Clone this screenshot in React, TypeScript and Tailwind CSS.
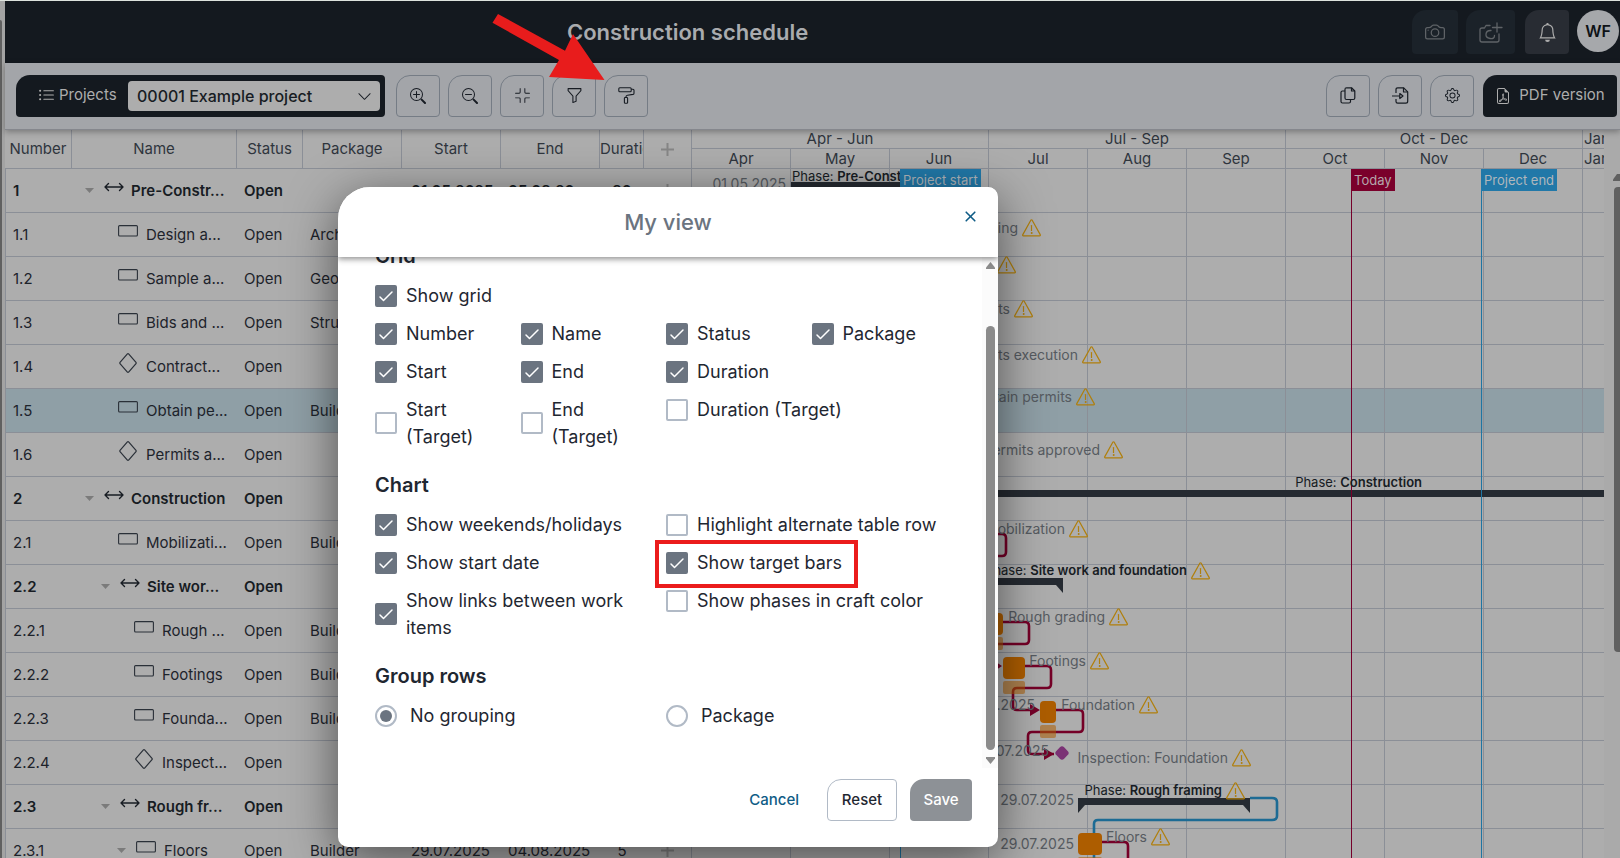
import React from "react";
import {
  BsListUl,
  BsZoomIn,
  BsZoomOut,
  BsFullscreenExit,
  BsFunnel,
  BsBell,
  BsCamera,
  BsGear,
  BsFileEarmarkPdf,
  BsChevronDown,
} from "react-icons/bs";

type Kind = "phase" | "task" | "milestone";
type Row = {
  no: string;
  name: string;
  kind: Kind;
  level: number;
  caret?: boolean;
  pkg?: string;
  start?: string;
  end?: string;
  days?: string;
  selected?: boolean;
};

const rows: Row[] = [
  { no: "1", name: "Pre-Constr...", kind: "phase", level: 0, caret: true, start: "01.05.2025", end: "05.09.20...", days: "90" },
  { no: "1.1", name: "Design a...", kind: "task", level: 1, pkg: "Architect" },
  { no: "1.2", name: "Sample a...", kind: "task", level: 1, pkg: "Geotech" },
  { no: "1.3", name: "Bids and ...", kind: "task", level: 1, pkg: "Structure" },
  { no: "1.4", name: "Contract...", kind: "milestone", level: 1 },
  { no: "1.5", name: "Obtain pe...", kind: "task", level: 1, pkg: "Builder", selected: true },
  { no: "1.6", name: "Permits a...", kind: "milestone", level: 1 },
  { no: "2", name: "Construction", kind: "phase", level: 0, caret: true },
  { no: "2.1", name: "Mobilizati...", kind: "task", level: 1, pkg: "Builder" },
  { no: "2.2", name: "Site wor...", kind: "phase", level: 1, caret: true },
  { no: "2.2.1", name: "Rough ...", kind: "task", level: 2, pkg: "Builder" },
  { no: "2.2.2", name: "Footings", kind: "task", level: 2, pkg: "Builder" },
  { no: "2.2.3", name: "Founda...", kind: "task", level: 2, pkg: "Builder" },
  { no: "2.2.4", name: "Inspect...", kind: "milestone", level: 2 },
  { no: "2.3", name: "Rough fr...", kind: "phase", level: 1, caret: true },
  { no: "2.3.1", name: "Floors", kind: "task", level: 2, caret: true, pkg: "Builder", start: "29.07.2025", end: "04.08.2025", days: "5" },
];

const months = ["Apr", "May", "Jun", "Jul", "Aug", "Sep", "Oct", "Nov", "Dec"];
const quarters = ["Apr - Jun", "Jul - Sep", "Oct - Dec"];

// Chart drawing origin: the canvas's top left corner in drawing units.
const OX = 692;
const OY = 169;
const CANVAS_W = 912;

type Label = { right: number; cy: number; text: string; phase?: boolean; warn?: boolean };
const labels: Label[] = [
  { right: 1041, cy: 228, text: "Design and engineering", warn: true },
  { right: 1016, cy: 265, text: "Sample approval", warn: true },
  { right: 1033, cy: 309, text: "Bids and contracts", warn: true },
  { right: 1101, cy: 355, text: "Contracts execution", warn: true },
  { right: 1095, cy: 397, text: "Obtain permits", warn: true },
  { right: 1123, cy: 450, text: "Permits approved", warn: true },
  { right: 1422, cy: 483, text: "Construction", phase: true },
  { right: 1088, cy: 529, text: "Mobilization", warn: true },
  { right: 1210, cy: 571, text: "Site work and foundation", phase: true, warn: true },
  { right: 1128, cy: 617, text: "Rough grading", warn: true },
  { right: 1109, cy: 661, text: "Footings", warn: true },
  { right: 1158, cy: 705, text: "Foundation", warn: true },
  { right: 1251, cy: 758, text: "Inspection: Foundation", warn: true },
  { right: 1245, cy: 791, text: "Rough framing", phase: true, warn: true },
  { right: 1170, cy: 837, text: "Floors", warn: true },
  { right: 786, cy: 184, text: "01.05.2025" },
  { right: 1035, cy: 705, text: "17.07.2025" },
  { right: 1049, cy: 751, text: "24.07.2025" },
  { right: 1074, cy: 800, text: "29.07.2025" },
  { right: 1074, cy: 844, text: "29.07.2025" },
];

function Warning() {
  return (
    <svg width="19" height="18" viewBox="0 0 19 18" fill="none" stroke="#b07f0c" strokeLinejoin="round" strokeLinecap="round">
      <path d="M8.8 1.2 .8 15.6q-.5 1.2.6 1.2h16.2q1.1 0 .6-1.2l-8-14.4q-.7-.9-1.4 0z" strokeWidth="1.2" />
      <path d="M9.5 6.5v5" strokeWidth="1.2" />
      <circle cx="9.5" cy="14" r=".5" fill="#b07f0c" />
    </svg>
  );
}

function KindIcon({ kind }: { kind: Kind }) {
  if (kind === "phase")
    return (
      <svg width="20" height="10" viewBox="0 0 20 10" fill="none" stroke="#171c23" strokeWidth="1.4" strokeLinecap="round" strokeLinejoin="round">
        <path d="M1 5h18M4.5 1.5 1 5l3.5 3.5M15.5 1.5 19 5l-3.5 3.5" />
      </svg>
    );
  if (kind === "task")
    return (
      <svg width="20" height="12" viewBox="0 0 20 12" fill="none" stroke="#2a3038" strokeWidth="1.1">
        <rect x=".6" y=".6" width="18.8" height="10.4" rx="1" />
      </svg>
    );
  return (
    <svg width="20" height="20" viewBox="0 0 20 20" fill="none" stroke="#2a3038" strokeWidth="1.2" strokeLinejoin="round">
      <path d="M9.4.9q.6-.6 1.2 0l7.4 8.500q.5.6 0 1.200l-7.400 8.500q-.6.6-1.200 0L2 10.600q-.5-.6 0-1.200z" />
    </svg>
  );
}

function PlusIcon() {
  return (
    <svg className="mx-auto block" width="13" height="13" viewBox="0 0 13 13" stroke="#868686" strokeWidth="2">
      <path d="M6.500 0v13M0 6.500h13" />
    </svg>
  );
}

function ToolButton({ label, children }: { label: string; children: React.ReactNode }) {
  return (
    <button
      type="button"
      aria-label={label}
      className="flex h-[42px] w-11 items-center justify-center rounded-[4px] rounded-tl-[14px] border border-[#757c85] text-[#171c23]"
    >
      {children}
    </button>
  );
}

function RollerIcon() {
  return (
    <svg width="17" height="17" viewBox="0 0 17 17" fill="none" stroke="currentColor" strokeWidth="1.1" strokeLinejoin="round">
      <rect x=".8" y=".8" width="12.4" height="4" rx="1" />
      <path d="M13.2 2.2h1.8q1 0 1 1v3q0 1-1 1.200l-5.500.8q-1.500.2-1.500 1.500v.8" />
      <rect x="6.400" y="10.500" width="3.200" height="5.700" rx=".8" />
    </svg>
  );
}

function CopyIcon() {
  return (
    <svg width="16" height="17" viewBox="0 0 16 17" fill="none" stroke="currentColor" strokeWidth="1.2" strokeLinejoin="round">
      <path d="M6.500.8h5L14.800 4v7q0 1.500-1.500 1.500H6.500Q5 12.500 5 11V2.300Q5 .8 6.500.8z" />
      <path d="M11.500.8V4h3.300M5 4H2.500Q1 4 1 5.500v9Q1 16 2.500 16h6.500q1.500 0 1.500-1.500v-2" />
    </svg>
  );
}

function ImportIcon() {
  return (
    <svg width="17" height="17" viewBox="0 0 17 17" fill="none" stroke="currentColor" strokeWidth="1.2" strokeLinejoin="round">
      <path d="M4 6V2.500Q4 .8 5.700.8h6l4 4v9.500q0 1.900-1.900 1.900H5.700Q4 16.200 4 14.500V12" />
      <path d="M11.500.8v4.200h4.200M0 9h7.500M7.800 6.500 11 9l-3.200 2.500z" />
    </svg>
  );
}

function CameraPlusIcon() {
  return (
    <svg width="24" height="21" viewBox="0 0 24 21" fill="none" stroke="currentColor" strokeWidth="1.3" strokeLinecap="round" strokeLinejoin="round">
      <path d="M11 3.500H7L5.500 6H3Q1 6 1 8v10q0 2 2 2h15q2 0 2-2v-6M18 1v9M13.500 5.500h9.500" />
      <path d="M12 8.500q-4.500-.3-5 3.500t4 4.500 4.500-3" />
    </svg>
  );
}

function Check({ label, checked }: { label: string; checked?: boolean }) {
  return (
    <label className="flex items-center gap-[9px]">
      <span className="relative flex size-[22px] shrink-0">
        <input
          type="checkbox"
          defaultChecked={checked}
          className="peer size-[22px] appearance-none rounded-[2px] border-2 border-[#b1bac6] bg-white checked:border-[#6b7480] checked:bg-[#6b7480]"
        />
        <svg
          className="pointer-events-none absolute inset-0 hidden peer-checked:block"
          width="22"
          height="22"
          viewBox="0 0 22 22"
          fill="none"
          stroke="#fff"
          strokeWidth="1.5"
          strokeLinecap="round"
          strokeLinejoin="round"
        >
          <path d="M5 12l3.500 3.500L17 7" />
        </svg>
      </span>
      <span>{label}</span>
    </label>
  );
}

function Radio({ label, checked }: { label: string; checked?: boolean }) {
  return (
    <label className="flex items-center gap-[13px]">
      <span className="relative flex size-[22px] shrink-0">
        <input
          type="radio"
          name="grouping"
          defaultChecked={checked}
          className="peer size-[22px] appearance-none rounded-full border-2 border-[#b1bac6] bg-white"
        />
        <span className="pointer-events-none absolute inset-[5px] hidden rounded-full bg-[#6b7480] peer-checked:block" />
      </span>
      <span>{label}</span>
    </label>
  );
}

function TopBar() {
  return (
    <header className="flex h-[62px] shrink-0 items-start bg-[#14191f] pr-px pt-[9px]">
      <h1 className="flex-1 pl-[562px] pt-1.5 text-[22px] font-semibold leading-8 text-[#a9abae]">Construction schedule</h1>
      <div className="flex items-start gap-2">
        <button type="button" aria-label="Snapshot" className="flex h-11 w-[46px] items-center justify-center rounded-[4px] rounded-tl-[14px] bg-[#1b2229] text-[#5f6367]">
          <BsCamera className="size-5" />
        </button>
        <button type="button" aria-label="Add snapshot" className="mr-0.5 flex h-11 w-[49px] items-center justify-center rounded-[4px] rounded-tl-[14px] bg-[#1b2229] text-[#5f6367]">
          <CameraPlusIcon />
        </button>
        <button type="button" aria-label="Notifications" className="flex h-11 w-11 items-center justify-center rounded-[4px] rounded-tl-[14px] bg-[#282c33] text-[#adadad]">
          <BsBell className="size-[19px]" />
        </button>
        <button type="button" className="size-[42px] rounded-full bg-[#a6a8ab] text-base font-semibold text-[#0e1216]">WF</button>
      </div>
    </header>
  );
}

function Toolbar() {
  return (
    <div className="z-10 flex h-[67px] shrink-0 items-center justify-between border-b border-[#85878d] bg-[#a3a5a9] pb-px pl-[11px] pr-[3px] shadow-[0_2px_6px_rgba(0,0,0,0.3)]">
      <div className="flex items-center gap-2">
        <div className="mr-[3px] flex h-[42px] items-center rounded-[4px] rounded-tl-[14px] bg-[#14191f] pl-[22px] pr-[5px]">
          <label htmlFor="project" className="flex w-[90px] items-center gap-1 text-[15px] text-[#adadad]">
            <BsListUl className="size-[17px]" />
            Projects
          </label>
          <div className="relative">
            <select id="project" className="h-[30px] w-[252px] appearance-none rounded-[4px] bg-[#adadad] pl-[9px] text-base font-medium text-[#171c23]">
              <option>00001 Example project</option>
            </select>
            <BsChevronDown className="pointer-events-none absolute right-2 top-2 size-[15px] text-[#171c23]" />
          </div>
        </div>
        <ToolButton label="Zoom in"><BsZoomIn className="size-4" /></ToolButton>
        <ToolButton label="Zoom out"><BsZoomOut className="size-4" /></ToolButton>
        <ToolButton label="Fit to view"><BsFullscreenExit className="size-[15px]" /></ToolButton>
        <ToolButton label="Filter"><BsFunnel className="size-[17px]" /></ToolButton>
        <ToolButton label="My view"><RollerIcon /></ToolButton>
      </div>
      <div className="flex items-center gap-2">
        <ToolButton label="Copy"><CopyIcon /></ToolButton>
        <ToolButton label="Import"><ImportIcon /></ToolButton>
        <ToolButton label="Settings"><BsGear className="size-[15px]" /></ToolButton>
        <button type="button" className="ml-px flex h-[42px] w-[134px] items-center justify-center gap-2 rounded-[4px] rounded-tl-[14px] bg-[#14191f] text-[15px] text-[#adadad]">
          <BsFileEarmarkPdf className="size-4" />
          PDF version
        </button>
      </div>
    </div>
  );
}

function TaskTable() {
  const th = "overflow-hidden whitespace-nowrap border-b border-r border-[#8b8f97] p-0 font-normal text-[#2f353d]";
  return (
    <table className="w-[687px] shrink-0 table-fixed border-separate border-spacing-0 self-start text-[15px] leading-5 text-[#1d232b]">
      <colgroup>
        <col className="w-[67px]" />
        <col className="w-[165px]" />
        <col className="w-[66px]" />
        <col className="w-[99px]" />
        <col className="w-[99px]" />
        <col className="w-[99px]" />
        <col className="w-11" />
        <col className="w-12" />
      </colgroup>
      <thead>
        <tr className="h-[39px]">
          {["Number", "Name", "Status", "Package", "Start", "End", "Duration"].map((h) => (
            <th key={h} className={th}>{h}</th>
          ))}
          <th className={th}>
            <button type="button" aria-label="Add column" className="block w-full">
              <PlusIcon />
            </button>
          </th>
        </tr>
      </thead>
      <tbody>
        {rows.map((r) => (
          <tr key={r.no} className={"h-11 " + (r.selected ? "bg-[#8f9fa6] " : "") + (r.kind === "phase" ? "font-semibold text-[#171c23]" : "")}>
            <td className="border-b border-l border-[#8b8f97] py-0 pl-[7px]">{r.no}</td>
            <td className="border-b border-[#8b8f97] p-0">
              <div className="flex items-center" style={{ paddingLeft: 13 + r.level * 16 }}>
                <span className="flex w-[9px] justify-center">
                  {r.caret && (
                    <svg width="9" height="5" viewBox="0 0 9 5" fill="#7b7b7b"><path d="M0 0h9L4.500 5z" /></svg>
                  )}
                </span>
                <span className={"mb-2 flex h-5 items-center " + (r.caret ? "ml-[10px]" : "ml-2")}>
                  <KindIcon kind={r.kind} />
                </span>
                <span className={"whitespace-nowrap " + (r.kind === "phase" ? "ml-[7px]" : "ml-2")}>{r.name}</span>
              </div>
            </td>
            <td className="border-b border-[#8b8f97] py-0 pl-[7px]">Open</td>
            <td className="border-b border-[#8b8f97] py-0 pl-[7px]">{r.pkg}</td>
            <td className="border-b border-[#8b8f97] py-0 pl-[9px]">{r.start}</td>
            <td className="border-b border-[#8b8f97] py-0 pl-[7px]">{r.end}</td>
            <td className="border-b border-[#8b8f97] p-0 text-center">{r.days}</td>
            <td className="border-b border-r border-[#8b8f97] p-0"><PlusIcon /></td>
          </tr>
        ))}
      </tbody>
    </table>
  );
}

function Drawing() {
  return (
    <svg className="absolute left-0 top-0" width={CANVAS_W} height="704" viewBox="692 169 912 704" fill="none">
      <g fill="#252a31">
        <path d="M791 182h109v7H791zM791 490h813v7H791z" />
        <path d="M791 578h272v15l-7-8H791z" />
        <path d="M1078 798h172v15l-7-8h-158l-7 8z" />
      </g>
      <g stroke="#750027" strokeWidth="2.6">
        <path d="M990 534h12q4 0 4 4v14q0 4-4 4h-12" />
        <path d="M1003 622h22q4 0 4 4v14q0 4-4 4h-40" />
        <path d="M1025 666h22q4 0 4 4v14q0 4-4 4h-30q-4 0-4 4v14q0 4 4 4h14" />
        <path d="M1056 710h23q4 0 4 4v14q0 4-4 4h-47q-4 0-4 4v14q0 4 4 4h22" />
        <path d="M1102 842h22q4 0 4 4v20" />
      </g>
      <g fill="#750027">
        <path d="M993 660l9 6-9 6zM1030 704l10 6-10 6zM1044 748l10 6-10 6z" />
      </g>
      <path d="M1250 798h22q5 0 5 4v14q0 4-5 4h-174q-4 0-4 4v42" stroke="#1d6b94" strokeWidth="2.6" />
      <g fill="#ad5d00">
        <rect x="985" y="613" width="18" height="22" rx="4" />
        <rect x="1003" y="657" width="22" height="22" rx="4" />
        <rect x="1040" y="701" width="16" height="22" rx="4" />
        <rect x="1078" y="833" width="24" height="22" rx="4" />
      </g>
      <g fill="#ad5d00" fillOpacity=".55">
        <rect x="985" y="637" width="18" height="13" rx="2" />
        <rect x="1003" y="681" width="22" height="13" rx="2" />
        <rect x="1040" y="725" width="16" height="13" rx="2" />
        <rect x="1078" y="857" width="24" height="13" rx="2" />
      </g>
      <rect x="1056.500" y="747.500" width="11" height="11" rx="3" transform="rotate(45 1062 753)" fill="#7b3275" />
      <path d="M1351.500 169v704" stroke="#75002a" />
      <path d="M1481.500 169v704M900.500 169v704" stroke="#1f75a3" />
    </svg>
  );
}

function Chart() {
  return (
    <div className="w-[912px] shrink-0 overflow-hidden text-[15px] text-[#2f353d]">
      <div className="flex h-[19px] border-b border-[#8b8f97]">
        {quarters.map((q) => (
          <div key={q} className="w-[297px] shrink-0 border-r border-[#8b8f97] text-center leading-[18px]">{q}</div>
        ))}
        <div className="pl-px leading-[18px]">Jan</div>
      </div>
      <div className="flex h-5 border-b border-[#8b8f97]">
        {months.map((m) => (
          <div key={m} className="w-[99px] shrink-0 border-r border-[#8b8f97] text-center leading-5">{m}</div>
        ))}
        <div className="pl-px leading-5">Jan</div>
      </div>
      <div className="relative">
        {rows.map((r) => (
          <div key={r.no} className={"flex h-11 border-b border-[#8b8f97] " + (r.selected ? "bg-[#8f9fa6]" : "")}>
            {months.map((m) => (
              <div key={m} className="w-[99px] shrink-0 border-r border-[#8b8f97]" />
            ))}
          </div>
        ))}
        <Drawing />
        {labels.map((l, i) => (
          <div
            key={i}
            className={"absolute flex h-5 items-center gap-1 whitespace-nowrap " + (l.phase ? "text-[13px] text-[#171c23]" : "text-sm text-[#565b61]")}
            style={{ right: OX + CANVAS_W - l.right, top: l.cy - 10 - OY }}
          >
            <span>
              {l.phase && "Phase: "}
              {l.phase ? <b className="font-semibold">{l.text}</b> : l.text}
            </span>
            {l.warn && <Warning />}
          </div>
        ))}
        <div className="absolute left-[100px] top-0 w-[108px] overflow-hidden whitespace-nowrap text-[13px] leading-[14px] text-[#171c23]">
          Phase: <b className="font-semibold">Pre-Construction</b>
        </div>
        <div className="absolute left-[208px] top-0 bg-[#2178a8] px-[3px] text-[13px] leading-[22px] text-[#b0b7bc]">Project start</div>
        <div className="absolute left-[659px] top-0 bg-[#7a002b] px-[3px] text-[13px] leading-[22px] text-[#b5a6ab]">Today</div>
        <div className="absolute left-[789px] top-0 bg-[#2178a8] px-[3px] text-[13px] leading-[22px] text-[#b0b7bc]">Project end</div>
      </div>
    </div>
  );
}

function ViewDialog() {
  return (
    <div role="dialog" aria-labelledby="view-title" className="absolute left-[338px] top-[186px] z-20 flex h-[660px] w-[660px] flex-col overflow-hidden rounded-[10px] rounded-tl-[32px] bg-white text-[#1f2731] shadow-[0_12px_50px_rgba(0,0,0,0.55)]">
      <div className="relative z-10 flex h-[70px] shrink-0 items-center justify-center bg-white shadow-[0_2px_6px_rgba(0,0,0,0.45)]">
        <h2 id="view-title" className="text-[22px] font-medium text-[#6b7480]">My view</h2>
        <button type="button" aria-label="Close" className="absolute right-[22px] top-[23px] flex size-3 items-center justify-center text-[#0f5c86]">
          <svg width="11" height="11" viewBox="0 0 11 11" stroke="currentColor" strokeWidth="1.6" strokeLinecap="round">
            <path d="M1.200 1.200l8.600 8.600M9.800 1.200 1.200 9.800" />
          </svg>
        </button>
      </div>
      <div className="flex min-h-0 flex-1 overflow-hidden">
        <form className="-mt-4 flex-1 pl-[37px] pr-[25px] text-lg leading-[27px]">
          <h3 className="text-xl font-semibold leading-[30px]">Grid</h3>
          <div className="mt-[11px] grid grid-cols-4 items-start gap-y-[11px]">
            <div className="col-span-4"><Check label="Show grid" checked /></div>
            <Check label="Number" checked />
            <Check label="Name" checked />
            <Check label="Status" checked />
            <Check label="Package" checked />
            <Check label="Start" checked />
            <Check label="End" checked />
            <div className="col-span-2"><Check label="Duration" checked /></div>
            <div className="w-28"><Check label="Start (Target)" /></div>
            <div className="w-28"><Check label="End (Target)" /></div>
            <div className="col-span-2"><Check label="Duration (Target)" /></div>
          </div>
          <h3 className="mt-5 text-xl font-semibold leading-[30px]">Chart</h3>
          <div className="mt-[11px] grid grid-cols-2 items-start gap-y-[11px]">
            <Check label="Show weekends/holidays" checked />
            <Check label="Highlight alternate table row" />
            <Check label="Show start date" checked />
            <div className="relative">
              <Check label="Show target bars" checked />
              <span className="pointer-events-none absolute -left-[11px] -top-[9px] h-12 w-[203px] border-4 border-[#eb1c1c]" />
            </div>
            <Check label="Show links between work items" checked />
            <Check label="Show phases in craft color" />
          </div>
          <h3 className="mt-5 text-xl font-semibold leading-[30px]">Group rows</h3>
          <div className="mt-[11px] grid grid-cols-2">
            <Radio label="No grouping" checked />
            <Radio label="Package" />
          </div>
        </form>
        <div className="flex w-4 flex-col items-center bg-[#fbfbfb] pb-1 pt-[5px]">
          <svg width="9" height="7" viewBox="0 0 9 7" fill="#8b8b8b"><path d="M4.500 0 9 5.500V7H0V5.500z" /></svg>
          <div className="mb-[7px] mt-[57px] w-[9px] flex-1 rounded-full bg-[#8b8b8b]" />
          <svg width="9" height="7" viewBox="0 0 9 7" fill="#8b8b8b"><path d="M4.500 7 9 1.500V0H0v1.500z" /></svg>
        </div>
      </div>
      <div className="flex h-[79px] shrink-0 items-start justify-end pr-[26px] pt-[11px] text-[15px] font-medium">
        <button type="button" className="mr-7 h-[42px] text-[#0f5c86]">Cancel</button>
        <button type="button" className="mr-[13px] h-[42px] w-[70px] rounded-[4px] rounded-tl-[14px] border border-[#b1bac6]">Reset</button>
        <button type="button" className="h-[42px] w-[62px] rounded-[4px] rounded-tl-[14px] bg-[#8d9196] text-white">Save</button>
      </div>
    </div>
  );
}

export default function App() {
  return (
    <div className="relative flex h-screen flex-col overflow-hidden border-t border-[#dde2dd] bg-[#adadad] font-['Inter',sans-serif]">
      <div className="flex min-h-0 flex-1">
        <div className="w-[5px] shrink-0 bg-[#a3a3a3] pt-[19px]">
          <div className="h-full w-0.5 rounded-tr bg-[#606060]" />
        </div>
        <div className="flex min-w-0 flex-1 flex-col">
          <TopBar />
          <Toolbar />
          <div className="flex min-h-0 flex-1 overflow-hidden">
            <TaskTable />
            <Chart />
            <div className="flex flex-1 flex-col items-end bg-[#aaaaaa] pt-11">
              <svg width="7" height="7" viewBox="0 0 7 7" fill="#606060"><path d="M4 0h3v7H0V5.500z" /></svg>
              <div className="mt-1.5 h-[465px] w-1.5 rounded-l bg-[#606060]" />
            </div>
          </div>
        </div>
      </div>
      <ViewDialog />
      <svg className="pointer-events-none absolute left-[490px] top-[10px] z-30" width="120" height="74" viewBox="490 11 120 74" fill="#e81c1c">
        <path d="M498 14 565 50.700 573 34 604.500 80 549 77 559 60 492.500 22.700z" />
      </svg>
    </div>
  );
}
